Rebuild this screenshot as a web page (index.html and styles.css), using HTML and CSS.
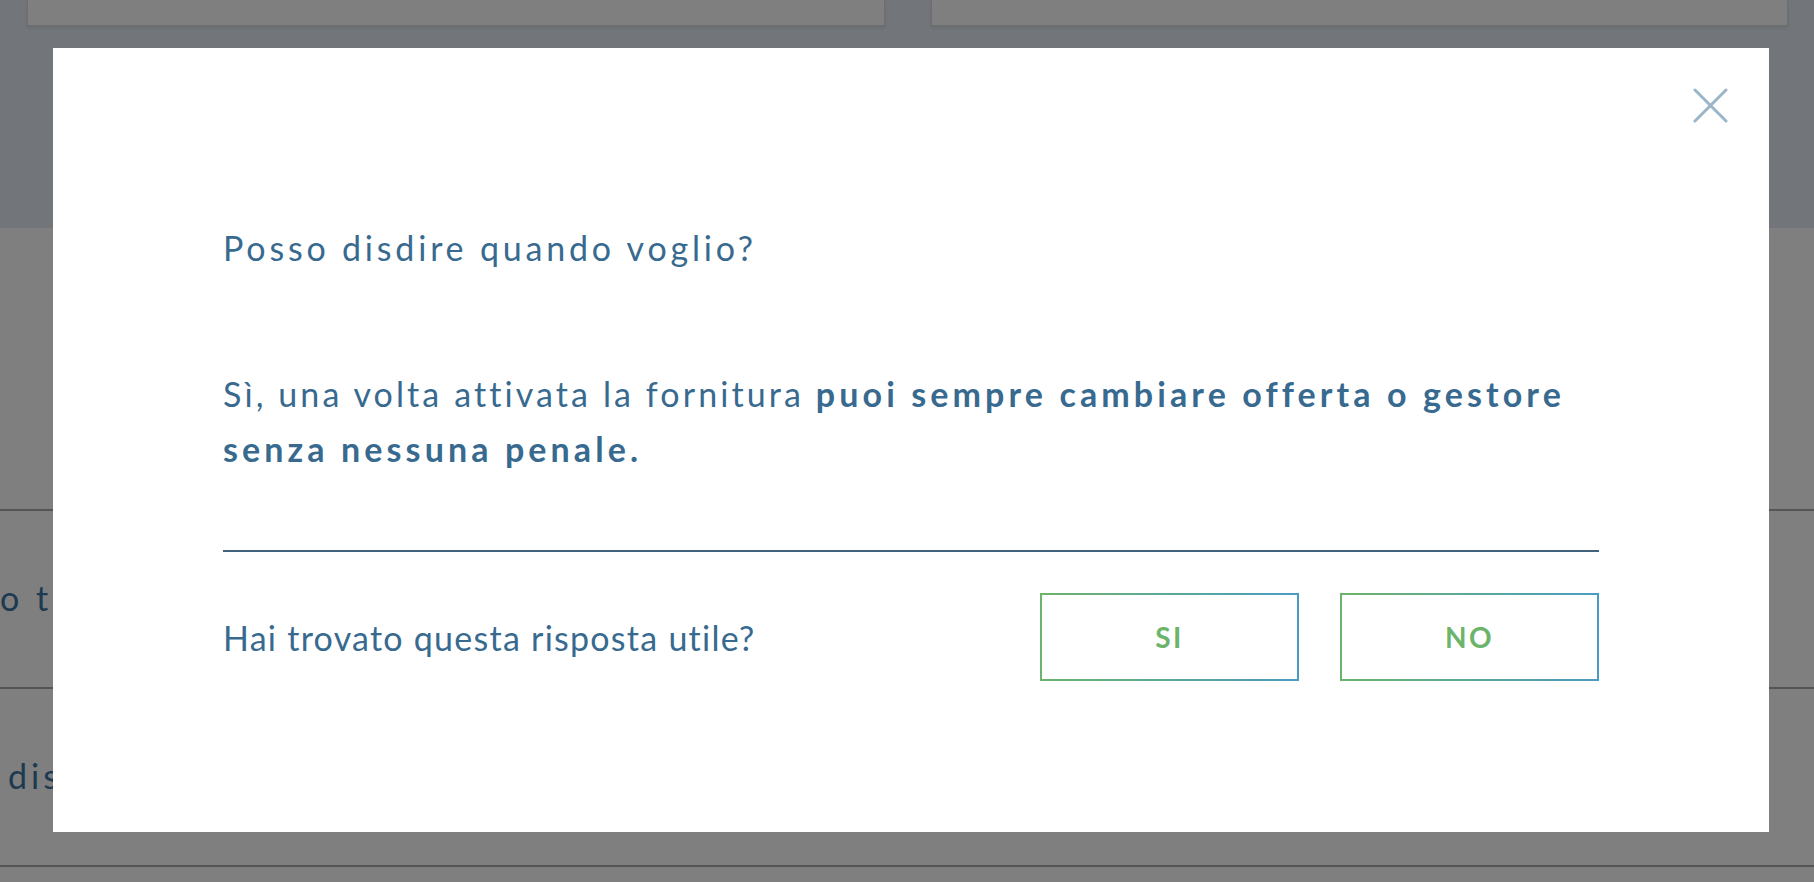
FILE: index.html
```html
<!DOCTYPE html>
<html lang="it">
<head>
  <meta charset="UTF-8">
  <meta name="viewport" content="width=device-width, initial-scale=1">
  <title>Domande frequenti</title>
  <link rel="stylesheet" href="styles.css">
</head>
<body>
  <div class="page">
    <div class="hero">
      <div class="hero-card"></div>
      <div class="hero-card"></div>
    </div>

    <div class="faq-list">
      <div class="faq-row">
        <span class="faq-question">o tempo ci vuole per l'attivazione?</span>
      </div>
      <div class="faq-row">
        <span class="faq-question">disdire quando voglio?</span>
      </div>
      <div class="faq-row"></div>
    </div>
  </div>

  <div class="overlay">
    <div class="modal">
      <button class="modal-close" aria-label="Chiudi">
        <svg width="35" height="35" viewBox="0 0 35 35">
          <path d="M2 2 L33 33 M33 2 L2 33" stroke="#99b6c8" stroke-width="3" stroke-linecap="round" fill="none"/>
        </svg>
      </button>

      <h2 class="modal-title">Posso disdire quando voglio?</h2>

      <p class="modal-answer">
        Sì, una volta attivata la fornitura <strong>puoi sempre cambiare offerta o gestore senza nessuna penale.</strong>
      </p>

      <div class="feedback">
        <span class="feedback-label">Hai trovato questa risposta utile?</span>
        <div class="feedback-buttons">
          <button class="feedback-btn">SI</button>
          <button class="feedback-btn">NO</button>
        </div>
      </div>
    </div>
  </div>
</body>
</html>
```

FILE: styles.css
```css
:root {
  --text-color: #386a90;
  --hero-bg: #e4ecf4;
  --row-border: #aaaaaa;
  --green: #6bb46b;
  --blue: #4b9cc4;
}

body {
  font-family: Lato, "Open Sans", sans-serif;
  margin: 0;
  background-color: #ffffff;
  overflow: hidden;
}

.page {
  height: 882px;
  overflow: hidden;
}

.hero {
  height: 228px;
  background-color: var(--hero-bg);
  display: flex;
  gap: 46px;
  padding: 0 26px 0 27px;
  box-sizing: border-box;
}

.hero-card {
  flex: 1;
  height: 25px;
  background-color: #ffffff;
  border: 1px solid #dcdcdc;
  border-top: none;
  box-shadow: 0 2px 3px rgba(0, 0, 0, 0.08);
}

.faq-list {
  padding-top: 281px;
}

.faq-row {
  height: 176px;
  border-top: 2px solid var(--row-border);
  display: flex;
  align-items: center;
}

.faq-question {
  font-size: 34px;
  letter-spacing: 4px;
  color: #3d74a0;
  white-space: nowrap;
  padding-bottom: 4px;
}

.faq-row:nth-child(2) .faq-question {
  padding-left: 8px;
}

.overlay {
  position: fixed;
  inset: 0;
  background-color: rgba(0, 0, 0, 0.5);
}

.modal {
  position: absolute;
  left: 53px;
  top: 48px;
  width: 1716px;
  height: 784px;
  box-sizing: border-box;
  padding: 180px 170px 0;
  background-color: #ffffff;
  color: var(--text-color);
}

.modal-close {
  position: absolute;
  top: 40px;
  right: 41px;
  width: 35px;
  height: 35px;
  padding: 0;
  border: none;
  background: none;
  cursor: pointer;
}

.modal-close svg {
  display: block;
}

.modal-title {
  margin: 0;
  font-size: 34px;
  line-height: 40px;
  font-weight: 400;
  letter-spacing: 3.8px;
}

.modal-answer {
  margin: 98px 0 0;
  font-size: 34px;
  line-height: 55px;
  letter-spacing: 3.1px;
  padding-bottom: 74px;
  border-bottom: 2px solid #41627a;
}

.modal-answer strong {
  font-weight: 700;
  letter-spacing: 4.1px;
}

.feedback {
  display: flex;
  align-items: center;
  justify-content: space-between;
  margin-top: 41px;
}

.feedback-label {
  font-size: 34px;
  letter-spacing: 1.25px;
}

.feedback-buttons {
  display: flex;
  gap: 41px;
}

.feedback-btn {
  width: 259px;
  height: 88px;
  background: #ffffff;
  border: 2px solid;
  border-image: linear-gradient(to right, var(--green), var(--blue)) 1;
  font-family: Lato, "Open Sans", sans-serif;
  font-size: 28px;
  font-weight: 700;
  letter-spacing: 2.5px;
  color: var(--green);
  cursor: pointer;
}
```
